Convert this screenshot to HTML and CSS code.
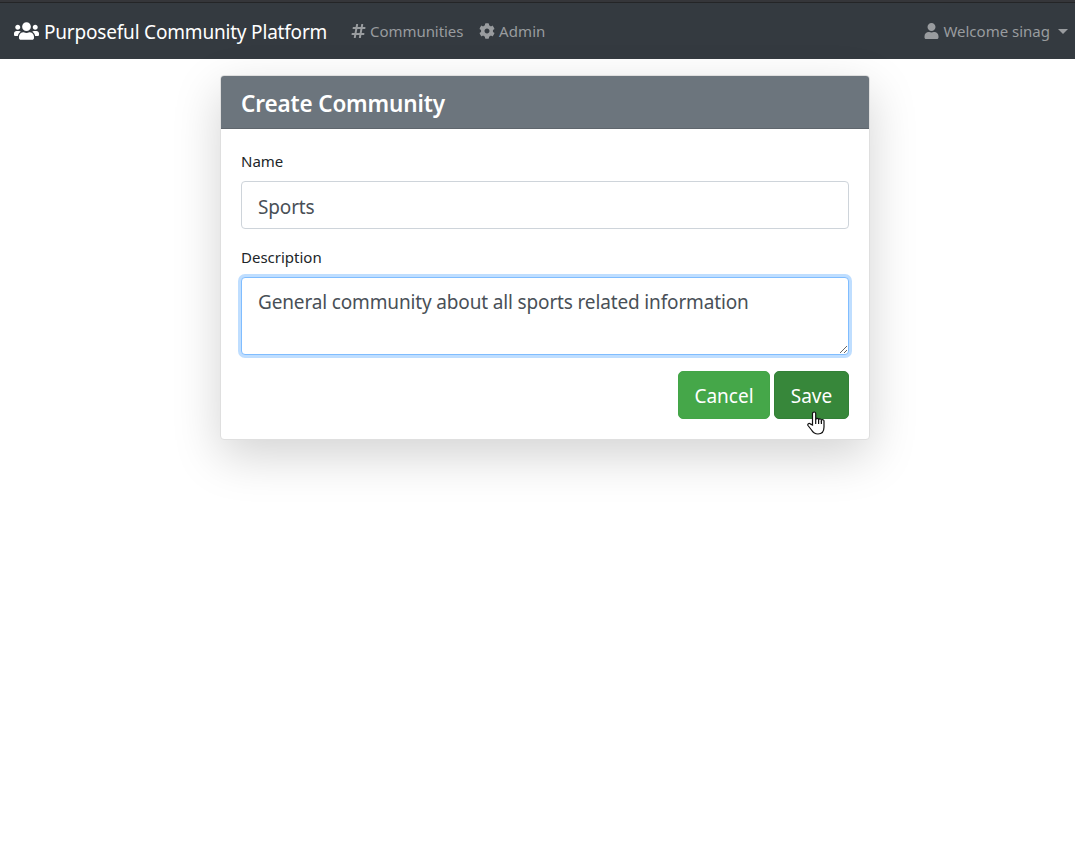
FILE: index.html
```html
<!DOCTYPE html>
<html lang="en">
<head>
<meta charset="utf-8">
<title>Purposeful Community Platform</title>
<link rel="stylesheet" href="styles.css">
</head>
<body>
<nav class="navbar">
  <a class="brand"><svg class="icon icon-users" viewBox="0 0 640 512"><path d="M96 224c35.3 0 64-28.7 64-64s-28.7-64-64-64-64 28.7-64 64 28.7 64 64 64zm448 0c35.3 0 64-28.7 64-64s-28.7-64-64-64-64 28.7-64 64 28.7 64 64 64zm32 32h-64c-17.6 0-33.5 7.1-45.1 18.6 40.3 22.1 68.9 62 75.1 109.4h66c17.7 0 32-14.3 32-32v-32c0-35.3-28.7-64-64-64zm-256 0c61.9 0 112-50.1 112-112S381.9 32 320 32 208 82.1 208 144s50.1 112 112 112zm76.8 32h-8.3c-20.8 10-43.9 16-68.5 16s-47.6-6-68.5-16h-8.3C179.6 288 128 339.6 128 403.2V432c0 26.5 21.5 48 48 48h288c26.5 0 48-21.5 48-48v-28.8c0-63.6-51.6-115.2-115.2-115.2zm-223.7-13.4C161.5 263.1 145.6 256 128 256H64c-35.3 0-64 28.7-64 64v32c0 17.7 14.3 32 32 32h65.9c6.3-47.4 34.9-87.3 75.2-109.4z"/></svg><span class="brand-text">Purposeful Community Platform</span></a>
  <a class="nav-link link-communities"><svg class="icon icon-hash" viewBox="0 0 448 512"><path d="M440.667 182.109l7.143-40c1.313-7.355-4.342-14.109-11.813-14.109h-74.81l14.623-81.891C377.123 38.754 371.468 32 363.997 32h-40.632a12 12 0 0 0-11.813 9.891L296.175 128H197.54l14.623-81.891C213.477 38.754 207.822 32 200.35 32h-40.632a12 12 0 0 0-11.813 9.891L132.528 128H53.432a12 12 0 0 0-11.813 9.891l-7.143 40C33.163 185.246 38.818 192 46.289 192h74.81L98.242 320H19.146a12 12 0 0 0-11.813 9.891l-7.143 40C-1.123 377.246 4.532 384 12.003 384h74.81L72.19 465.891C70.877 473.246 76.532 480 84.003 480h40.632a12 12 0 0 0 11.813-9.891L151.826 384h98.634l-14.623 81.891C234.523 473.246 240.178 480 247.65 480h40.632a12 12 0 0 0 11.813-9.891L315.472 384h79.096a12 12 0 0 0 11.813-9.891l7.143-40c1.313-7.355-4.342-14.109-11.813-14.109h-74.81l22.857-128h79.096a12 12 0 0 0 11.813-9.891zM261.889 320h-98.634l22.857-128h98.634l-22.857 128z"/></svg><span>Communities</span></a>
  <a class="nav-link link-admin"><svg class="icon icon-cog" viewBox="0 0 512 512"><path d="M487.4 315.7l-42.6-24.6c4.3-23.2 4.3-47 0-70.2l42.6-24.6c4.9-2.8 7.1-8.6 5.5-14-11.1-35.6-30-67.8-54.7-94.6-3.8-4.1-10-5.1-14.8-2.3L380.8 110c-17.9-15.4-38.5-27.3-60.8-35.1V25.8c0-5.6-3.9-10.5-9.4-11.7-36.7-8.2-74.3-7.8-109.2 0-5.5 1.2-9.4 6.1-9.4 11.7V75c-22.2 7.9-42.8 19.8-60.8 35.1L88.7 85.5c-4.9-2.8-11-1.9-14.8 2.3-24.7 26.7-43.6 58.9-54.7 94.6-1.7 5.4.6 11.2 5.5 14L67.3 221c-4.3 23.2-4.3 47 0 70.2l-42.6 24.6c-4.9 2.8-7.1 8.6-5.5 14 11.1 35.6 30 67.8 54.7 94.6 3.8 4.1 10 5.1 14.8 2.3l42.6-24.6c17.9 15.4 38.5 27.3 60.8 35.1v49.2c0 5.6 3.9 10.5 9.4 11.7 36.7 8.2 74.3 7.8 109.2 0 5.5-1.2 9.4-6.1 9.4-11.7v-49.2c22.2-7.9 42.8-19.8 60.8-35.1l42.6 24.6c4.9 2.8 11 1.9 14.8-2.3 24.7-26.7 43.6-58.9 54.7-94.6 1.5-5.5-.7-11.3-5.6-14.1zM256 336c-44.1 0-80-35.9-80-80s35.9-80 80-80 80 35.9 80 80-35.9 80-80 80z"/></svg><span>Admin</span></a>
  <a class="nav-link link-user"><svg class="icon icon-user" viewBox="0 0 448 512"><path d="M224 256c70.7 0 128-57.3 128-128S294.7 0 224 0 96 57.3 96 128s57.3 128 128 128zm89.6 32h-16.7c-22.2 10.2-46.9 16-72.9 16s-50.6-5.8-72.9-16h-16.7C60.2 288 0 348.2 0 422.4V464c0 26.5 21.5 48 48 48h352c26.5 0 48-21.5 48-48v-41.6c0-74.2-60.2-134.4-134.4-134.4z"/></svg><span>Welcome sinag</span><i class="caret"></i></a>
</nav>
<main class="card">
  <h1 class="card-header"><span>Create Community</span></h1>
  <form class="card-body">
    <label class="label label-name" for="name">Name</label>
    <input class="control control-name" id="name" type="text" value="Sports">
    <label class="label label-description" for="description">Description</label>
    <textarea class="control control-area" id="description" spellcheck="false">General community about all sports related information</textarea>
    <div class="actions">
      <button class="btn btn-cancel" type="button">Cancel</button>
      <button class="btn btn-save" type="button">Save<svg class="pointer" viewBox="0 0 18 24"><path d="M5.500 14V2.600a1.600 1.600 0 0 1 3.200 0V8.500a1.500 1.500 0 0 1 2.900.200 1.500 1.500 0 0 1 2.800.700 1.400 1.400 0 0 1 2.600.900V16c0 4-2 7-6 7-3.500 0-5-1.500-6.500-4L1 14.500c-.8-1.500 1-2.700 2.300-1.600z"/><path class="pointer-lines" d="M8.700 8v5M11.600 9v4M14.400 10v3"/></svg></button>
    </div>
  </form>
</main>
</body>
</html>
```
FILE: styles.css
```css
* { box-sizing: border-box; }
html { background: #fff; }
body { min-height: 100vh; margin: 0; color: #212529; font-family: "Noto Sans", sans-serif; font-size: 15px; line-height: 24px; }
.navbar { display: flex; align-items: center; height: 59px; padding: 1px 7px 0 14px; background: #343a40; border-top: 2px solid #35363a; box-shadow: inset 0 1px #242527; white-space: nowrap; }
.brand, .nav-link { display: flex; align-items: center; }
.brand { color: #fff; font-size: 19px; line-height: 30px; }
.brand-text { width: 283px; margin-left: 5px; padding-top: 1px; letter-spacing: -.19px; }
.nav-link { color: #999c9f; }
.icon { display: block; fill: currentColor; flex: none; }
.icon-users { width: 25px; height: 20px; }
.icon-hash, .icon-user { width: 15px; height: 16px; margin-right: 4px; }
.icon-cog { width: 16px; height: 16px; margin-right: 4px; }
.link-communities { width: 112px; margin-left: 24px; letter-spacing: -.05px; }
.link-admin { margin-left: 16px; letter-spacing: .1px; }
.link-user { margin-left: auto; }
.caret { margin-left: 8px; border: 5px solid transparent; border-top-color: currentColor; border-bottom: 0; }
.card { width: 650px; height: 365px; margin: 16px auto 0 220px; border: 1px solid #dfdfdf; border-radius: 4px; background: #fff; box-shadow: 0 16px 48px rgba(0,0,0,.175); }
.card-header { height: 53px; margin: 0; padding: 11px 20px 7px; border-bottom: 1px solid #5f666d; border-radius: 3px 3px 0 0; background: #6c757d; color: #fff; font-size: 22.5px; font-weight: 600; line-height: 34px; letter-spacing: -.14px; }
.card-body { display: flex; flex-direction: column; padding: 20px; }
.label { height: 24px; margin-bottom: 8px; }
.control { display: block; width: 608px; height: 48px; padding: 8px 16px; border: 1px solid #ced4da; border-radius: 4px; outline: 0; background: #fff; color: #495057; font: 19px/30px "Noto Sans", sans-serif; letter-spacing: -.15px; }
.control-name { padding: 11px 16px 7px; }
.label-description { margin-top: 16px; }
.control-area { height: 78px; padding-top: 9px; border-color: #80bdff; box-shadow: 0 0 0 3px #bfdeff; resize: vertical; overflow: hidden; }
.actions { display: flex; justify-content: flex-end; gap: 4px; margin-top: 16px; }
.btn { position: relative; height: 48px; padding: 2px 0 0; border: 1px solid #43a547; border-radius: 5px; background: #45a749; color: #fff; font: 19px/30px "Noto Sans", sans-serif; }
.btn-cancel { width: 92px; }
.btn-save { width: 75px; border-color: #338037; background: #37873a; }
.pointer { position: absolute; left: 32px; top: 39px; width: 18px; height: 24px; fill: #fff; stroke: #111; stroke-width: 1.2; }
.pointer-lines { fill: none; }
```
